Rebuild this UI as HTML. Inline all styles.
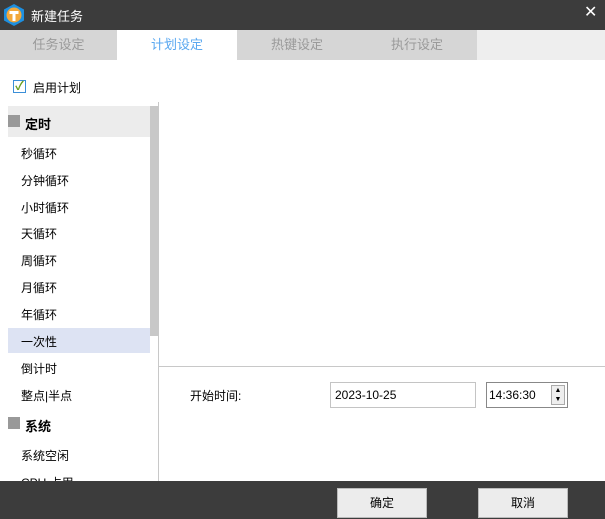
<!DOCTYPE html><html><head><meta charset="utf-8"><style>
*{margin:0;padding:0;box-sizing:border-box}
body{width:605px;height:519px;position:relative;overflow:hidden;background:#fff;font:12px "Liberation Sans","Noto Sans CJK SC",sans-serif;color:#000}
.a{position:absolute}
.tab{position:absolute;top:30px;height:30px;line-height:30px;text-align:center;font-size:13px;color:#9a9a9a;width:120px}
.it{position:absolute;left:21px;font-size:12px}
</style></head><body>
<div class="a" style="left:0;top:0;width:605px;height:30px;background:#3c3c3c"></div>
<svg class="a" style="left:2px;top:3px" width="24" height="24" viewBox="0 0 24 24"><path d="M12 1 L22 6.5 V17.5 L12 23 L2 17.5 V6.5Z" fill="#1d8fe0"/><circle cx="12" cy="12" r="7.5" fill="#f3a83a"/><path d="M7.5 8h9v3h-3v7h-3v-7h-3z" fill="#fff"/></svg>
<div class="a" style="left:31px;top:6px;color:#fff;font-size:13px">新建任务</div>
<div class="a" style="left:584px;top:2px;color:#fff;font-size:16px">✕</div>
<div class="a" style="left:0;top:30px;width:477px;height:30px;background:#d6d6d6"></div>
<div class="a" style="left:477px;top:30px;width:128px;height:30px;background:#eee"></div>
<div class="tab" style="left:0;width:117px">任务设定</div>
<div class="tab" style="left:117px;background:#fff;color:#5aa8f0">计划设定</div>
<div class="tab" style="left:237px">热键设定</div>
<div class="tab" style="left:357px">执行设定</div>
<div class="a" style="left:13px;top:80px;width:13px;height:13px;border:1px solid #3b8fd8;background:#fff;color:#6a9e1f;font-size:12px;line-height:11px;text-align:center;font-weight:bold">✓</div>
<div class="a" style="left:33px;top:79px">启用计划</div>
<div class="a" style="left:8px;top:106px;width:142px;height:31px;background:#ececec"></div>
<div class="a" style="left:150px;top:106px;width:8px;height:230px;background:#c8c8c8"></div>
<div class="a" style="left:158px;top:102px;width:1px;height:379px;background:#c8c8c8"></div>
<div class="a" style="left:8px;top:115px;width:12px;height:12px;background:#999"></div>
<div class="a" style="left:25px;top:114px;font-weight:bold;font-size:13px">定时</div>
<div class="it" style="top:145px">秒循环</div>
<div class="it" style="top:172px">分钟循环</div>
<div class="it" style="top:199px">小时循环</div>
<div class="it" style="top:225px">天循环</div>
<div class="it" style="top:252px">周循环</div>
<div class="it" style="top:279px">月循环</div>
<div class="it" style="top:306px">年循环</div>
<div class="a" style="left:8px;top:328px;width:142px;height:25px;background:#dde3f3"></div>
<div class="it" style="top:333px">一次性</div>
<div class="it" style="top:360px">倒计时</div>
<div class="it" style="top:387px">整点|半点</div>
<div class="a" style="left:8px;top:417px;width:12px;height:12px;background:#999"></div>
<div class="a" style="left:25px;top:416px;font-weight:bold;font-size:13px">系统</div>
<div class="it" style="top:447px">系统空闲</div>
<div class="it" style="top:474px">CPU 占用</div>
<div class="a" style="left:158px;top:366px;width:447px;height:1px;background:#c8c8c8"></div>
<div class="a" style="left:190px;top:387px">开始时间:</div>
<div class="a" style="left:330px;top:382px;width:146px;height:26px;border:1px solid #c4c4c4;padding:5px 4px">2023-10-25</div>
<div class="a" style="left:486px;top:382px;width:82px;height:26px;border:1px solid #888;padding:5px 2px">14:36:30</div>
<div class="a" style="left:551px;top:385px;width:14px;height:20px;border:1px solid #aaa;background:#eee;font-size:7px;line-height:9px;text-align:center">▲<br>▼</div>
<div class="a" style="left:0;top:481px;width:605px;height:38px;background:#3c3c3c"></div>
<div class="a" style="left:337px;top:488px;width:90px;height:30px;background:#ececec;border:1px solid #bbb;text-align:center;line-height:28px">确定</div>
<div class="a" style="left:478px;top:488px;width:90px;height:30px;background:#ececec;border:1px solid #bbb;text-align:center;line-height:28px">取消</div>
</body></html>
